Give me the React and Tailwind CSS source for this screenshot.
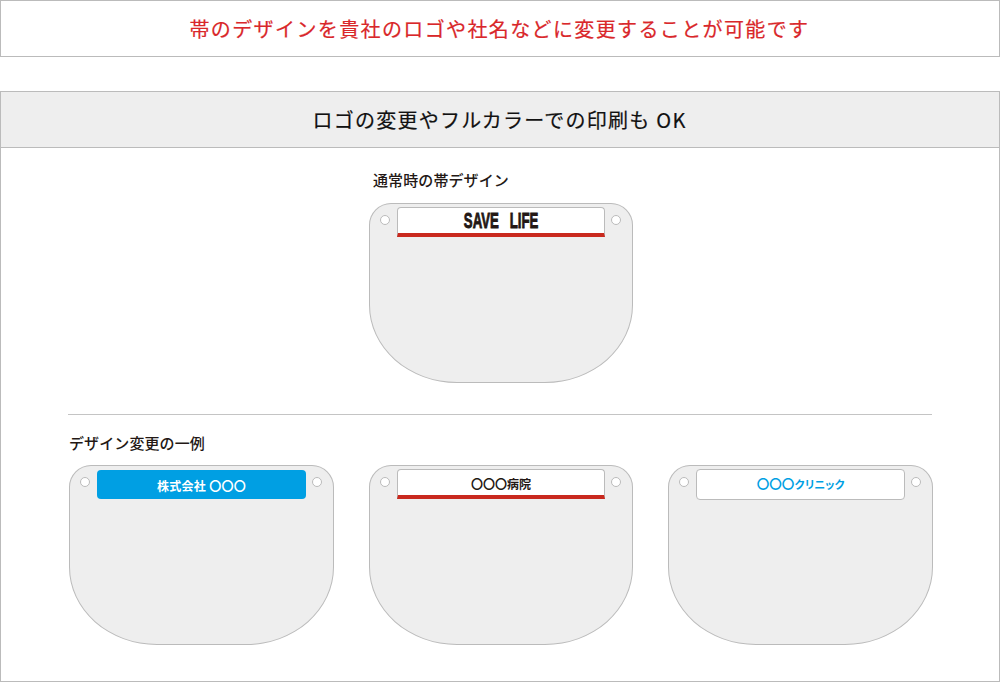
import React from 'react';

const FONT = "font-['Noto_Sans_CJK_JP','Noto_Sans',sans-serif]";

const Shield = ({ wide, bandClass, children }) => (
  <div className={`relative ${wide ? 'w-[265px]' : 'w-[264px]'} h-[180px] border border-[#bbbbbb] bg-[#eeeeee] rounded-[22px_22px_88px_88px/22px_22px_78px_78px] pt-[3px] pl-[27px]`}>
    <span className="absolute left-[10px] top-[11px] w-[10px] h-[10px] rounded-full border border-[#bbbbbb] bg-white" />
    <span className="absolute right-[11px] top-[11px] w-[10px] h-[10px] rounded-full border border-[#bbbbbb] bg-white" />
    <div className={`${wide ? 'w-[209px]' : 'w-[208px]'} flex items-center justify-center ${bandClass}`}>
      {children}
    </div>
  </div>
);

const redBand = 'h-[30px] bg-white border border-[#bbbbbb] border-b-4 border-b-[#c9291e] rounded-t-[4px]';

export default function App() {
  return (
    <div className={`w-[1000px] h-[682px] bg-white ${FONT}`}>
      <div className="h-[57px] border border-[#bbbbbb] flex items-center justify-center pr-[1px] text-[20px] tracking-[1.38px] [-webkit-text-stroke:0.2px_#d9272a] text-[#d9272a]">
        帯のデザインを貴社のロゴや社名などに変更することが可能です
      </div>

      <div className="mt-[34px] h-[591px] border border-[#bbbbbb]">
        <div className="h-[56px] bg-[#eeeeee] border-b border-[#bbbbbb] flex items-center justify-center pr-[1px] text-[20px] tracking-[1.25px] [-webkit-text-stroke:0.2px_#111111] text-[#111111]">
          ロゴの変更やフルカラーでの印刷も OK
        </div>

        <div className="pt-[21px] pl-[368px]">
          <p className="pl-[4px] text-[15px] leading-[21px] font-medium tracking-[0.1px] text-[#231815]">通常時の帯デザイン</p>
          <div className="mt-[13px]">
            <Shield bandClass={redBand}>
              <span className="inline-block scale-x-[.6] font-['Liberation_Sans',sans-serif] font-bold text-[22px] leading-none whitespace-pre [word-spacing:3px] text-[#231815] [-webkit-text-stroke:0.9px_#231815]">
                SAVE  LIFE
              </span>
            </Shield>
          </div>
        </div>

        <div className="mx-[67px] mt-[31px] border-t border-[#c4c4c4]" />

        <p className="ml-[68px] mt-[17px] text-[15px] leading-[22px] font-medium tracking-[0.1px] text-[#231815]">デザイン変更の一例</p>

        <div className="mt-[11px] ml-[68px] flex gap-[35px]">
          <Shield wide bandClass="h-[29px] mt-[1px] bg-[#009fe3] rounded-[4px]">
            <span className="pt-[2px] text-[12px] font-bold tracking-[0.3px] whitespace-pre text-white">株式会社 〇〇〇</span>
          </Shield>
          <Shield bandClass={redBand}>
            <span className="pt-[3px] text-[12px] font-bold text-[#231815]">〇〇〇病院</span>
          </Shield>
          <Shield wide bandClass="h-[31px] bg-white border border-[#bbbbbb] rounded-[4px]">
            <span className="text-[12.5px] font-bold text-[#009fe3]">
              〇〇〇<span className="text-[11px] tracking-[-1px]">クリニック</span>
            </span>
          </Shield>
        </div>
      </div>
    </div>
  );
}
